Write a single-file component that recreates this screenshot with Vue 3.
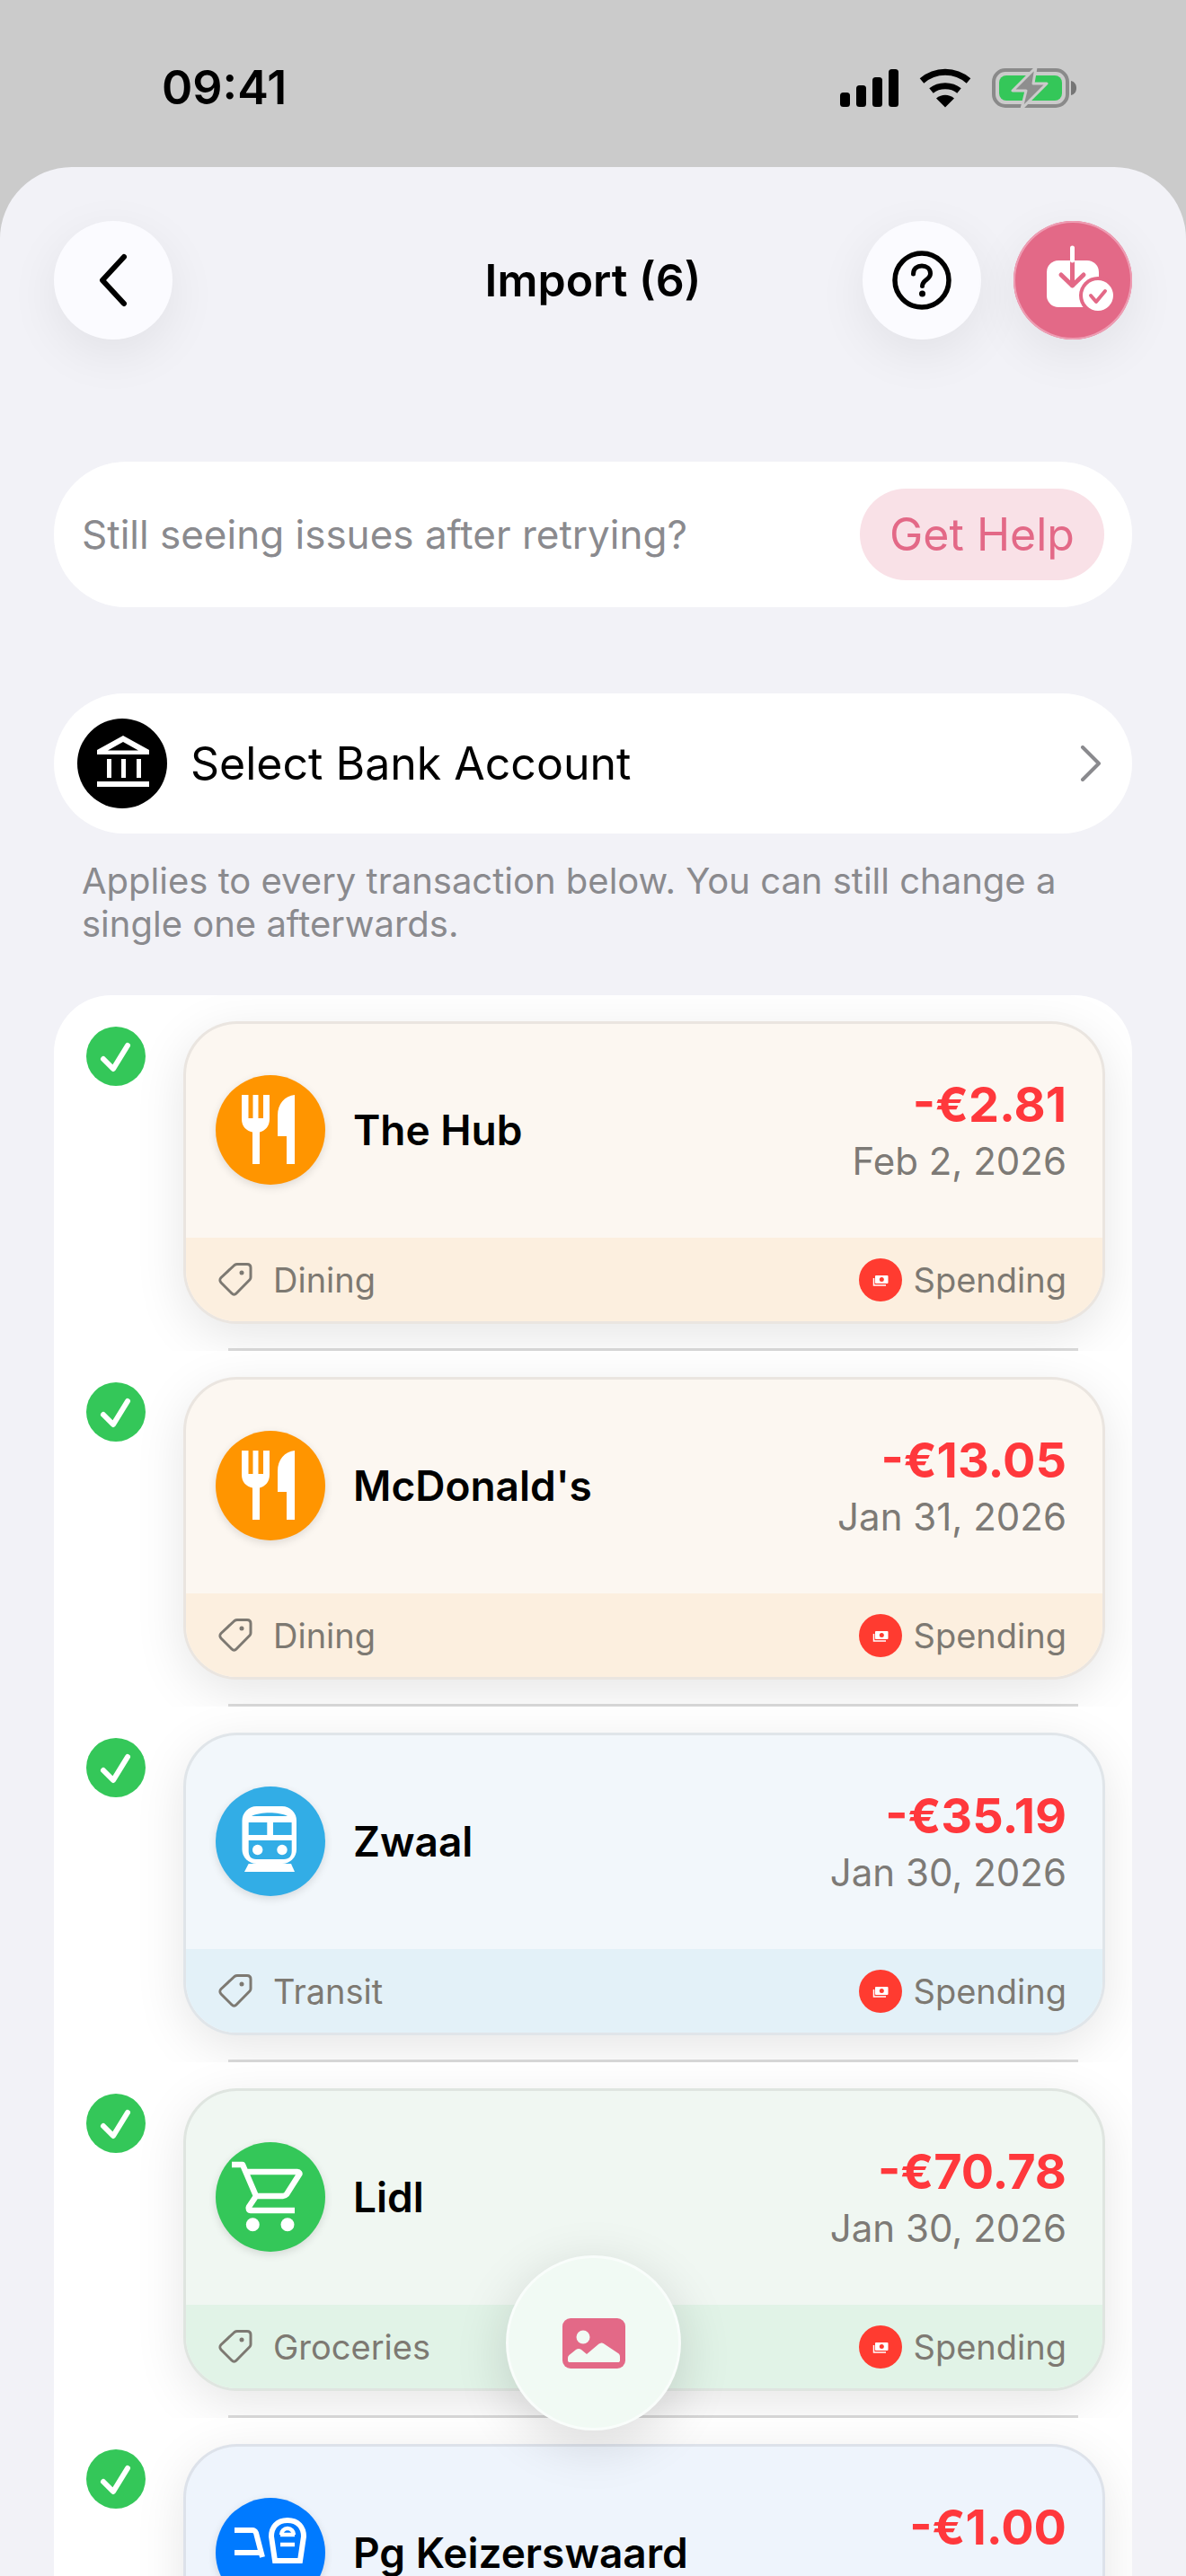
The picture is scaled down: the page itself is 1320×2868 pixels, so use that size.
<script setup>
const rows = [
  { name: 'The Hub', amount: '-€2.81', date: 'Feb 2, 2026', cat: 'Dining', icon: 'food', color: '#ff9500', top: '#fcf7f1', band: '#fcefdf' },
  { name: "McDonald's", amount: '-€13.05', date: 'Jan 31, 2026', cat: 'Dining', icon: 'food', color: '#ff9500', top: '#fcf7f1', band: '#fcefdf' },
  { name: 'Zwaal', amount: '-€35.19', date: 'Jan 30, 2026', cat: 'Transit', icon: 'train', color: '#32ade6', top: '#f2f7fb', band: '#e3f1f8' },
  { name: 'Lidl', amount: '-€70.78', date: 'Jan 30, 2026', cat: 'Groceries', icon: 'cart', color: '#34c759', top: '#f0f7f2', band: '#e1f3e7' },
  { name: 'Pg Keizerswaard', amount: '-€1.00', icon: 'mixed', color: '#007aff', top: '#eef4fc', band: '#e2edfb' }
]
</script>

<template>
  <div class="phone">
    <header class="status">
      <span class="time">09:41</span>
      <div class="status-icons">
        <svg class="signal" width="65" height="42" viewBox="0 0 65 42" fill="#000">
          <rect x="0" y="26" width="11" height="16" rx="3.5" />
          <rect x="18" y="18" width="11" height="24" rx="3.5" />
          <rect x="36" y="9" width="11" height="33" rx="3.5" />
          <rect x="54" y="0" width="11" height="42" rx="3.5" />
        </svg>
        <svg width="58" height="44" viewBox="0 0 58 44" fill="none" stroke="#000" stroke-width="7">
          <path d="M3 14C18 1 40 1 55 14" />
          <path d="M13.5 25C22 18 36 18 44.500 25" />
          <path d="M19 33.500L29 43.500L39 33.500C33 28.500 25 28.500 19 33.500Z" fill="#000" stroke="none" />
        </svg>
        <svg width="94" height="46" viewBox="0 0 94 46">
          <rect x="2" y="3" width="82" height="40" rx="13" fill="none" stroke="#8a8a8a" stroke-width="4" />
          <rect x="8" y="9" width="70" height="28" rx="8" fill="#34c759" />
          <path d="M88 15c4 1 6 4 6 8s-2 7-6 8z" fill="#757575" />
          <path d="M49 0L23 26H38L33 46L61 18H46Z" fill="#8e8e8e" stroke="#cbcbcb" stroke-width="3" stroke-linejoin="round" />
        </svg>
      </div>
    </header>

    <main class="sheet">
      <div class="topbar">
        <button class="round">
          <svg width="36" height="60" viewBox="0 0 36 60" fill="none" stroke="#000" stroke-width="6" stroke-linecap="round" stroke-linejoin="round">
            <path d="M30 4L6 30L30 56" />
          </svg>
        </button>
        <h1 class="title">Import (6)</h1>
        <div class="actions">
          <button class="round">
            <svg width="68" height="68" viewBox="0 0 68 68" fill="none">
              <circle cx="34" cy="34" r="30" stroke="#000" stroke-width="5.500" />
              <path d="M24.500 27c0-6 4.500-9 9.500-9s9.500 3 9.500 8.500c0 7-9 7-9 14" stroke="#000" stroke-width="5" stroke-linecap="round" />
              <circle cx="34.500" cy="49" r="3.500" fill="#000" />
            </svg>
          </button>
          <button class="round primary">
            <svg width="132" height="132" viewBox="1128 246 132 132" fill="none">
              <rect x="1165" y="290" width="58" height="52" rx="13" fill="#fff" />
              <path d="M1193.500 276V318M1181 306L1193.500 318L1206 306" stroke="#e36987" stroke-width="5" stroke-linecap="round" stroke-linejoin="round" />
              <path d="M1193.500 276V290" stroke="#fff" stroke-width="5" stroke-linecap="round" />
              <circle cx="1222" cy="329" r="21" fill="#e36987" />
              <circle cx="1222" cy="329" r="17" fill="#fff" />
              <path d="M1214 329L1220 336L1230 324" stroke="#e36987" stroke-width="4" stroke-linecap="round" stroke-linejoin="round" />
            </svg>
          </button>
        </div>
      </div>

      <section class="pill-card banner">
        <span class="banner-text">Still seeing issues after retrying?</span>
        <span class="help">Get Help</span>
      </section>

      <section class="pill-card bank">
        <span class="bank-icon">
          <svg width="100" height="100" viewBox="0 0 100 100" fill="#fff">
            <path fill-rule="evenodd" d="M51 19L80 35V40H22V35ZM51 26L34 35.500H68Z" />
            <rect x="33" y="45" width="5" height="21" />
            <rect x="49" y="45" width="5" height="21" />
            <rect x="66" y="45" width="5" height="21" />
            <rect x="22" y="70" width="58" height="6" />
          </svg>
        </span>
        <span class="bank-label">Select Bank Account</span>
        <svg class="chev" width="24" height="40" viewBox="0 0 24 40" fill="none" stroke="#8a8a8e" stroke-width="4" stroke-linecap="round" stroke-linejoin="round">
          <path d="M3 2L21 20L3 38" />
        </svg>
      </section>

      <p class="hint">Applies to every transaction below. You can still change a single one afterwards.</p>

      <section class="list">
        <article v-for="r in rows" :key="r.name" class="row">
          <div class="row-body">
            <svg class="check" width="66" height="66" viewBox="0 0 66 66" fill="none">
              <circle cx="33" cy="33" r="33" fill="#34c759" />
              <path d="M19 36L30 47L46 21" stroke="#fff" stroke-width="6" stroke-linecap="round" stroke-linejoin="round" />
            </svg>
            <div class="card" :style="{ background: r.top }">
              <div class="card-top">
                <span class="cat-icon" :style="{ background: r.color }">
                  <svg width="122" height="122" viewBox="0 0 122 122">
                    <g v-if="r.icon === 'food'" fill="#fff">
                      <path d="M29 22h7.500v26h5V22h6v26h5.500V22H60v27c0 8-5 13-11 14.500V99h-8V63.500C34 62 29 57 29 49z" />
                      <path d="M88 22V99H79V68H69V45C69 32 77 23 88 22z" />
                    </g>
                    <g v-else-if="r.icon === 'train'">
                      <rect x="29.500" y="22" width="60.500" height="64" rx="16" fill="#fff" />
                      <path d="M36.700 86H84L88 95H32Z" fill="#fff" />
                      <path d="M40 33C50 28 70 28 80 33Z" fill="#32ade6" />
                      <rect x="36.700" y="40" width="20.600" height="14" fill="#32ade6" />
                      <rect x="64" y="40" width="20.600" height="14" fill="#32ade6" />
                      <path d="M36.700 60H84.700V72C84.700 77 82 81 76 81H45C39 81 36.700 77 36.700 72Z" fill="#32ade6" />
                      <circle cx="46.700" cy="70.500" r="5.700" fill="#fff" />
                      <circle cx="74" cy="70.500" r="5.700" fill="#fff" />
                    </g>
                    <g v-else-if="r.icon === 'cart'">
                      <path d="M18 25H30L45 60L37 72C36 74 37 76 39 76H88M35 33H91C93 33 94 35 93 36L79 58C78 59 77 60 75 60H45" fill="none" stroke="#fff" stroke-width="6.500" stroke-linejoin="round" />
                      <circle cx="41.300" cy="91.700" r="7.500" fill="#fff" />
                      <circle cx="80" cy="91.700" r="7.500" fill="#fff" />
                    </g>
                    <g v-else fill="none" stroke="#fff" stroke-width="6">
                      <path d="M80 25C68 25 62 33 62 43L66 70H94L98 43C98 33 92 25 80 25Z" />
                      <path d="M73 41A7 7 0 0 1 87 41M72 41H88M72 52H88" stroke-width="4.500" />
                      <path d="M21 36H41C43 36 44 37 45 39L52 66M21 61H50" />
                    </g>
                  </svg>
                </span>
                <span class="name">{{ r.name }}</span>
                <div class="money">
                  <span class="amount">{{ r.amount }}</span>
                  <span v-if="r.date" class="date">{{ r.date }}</span>
                </div>
              </div>
              <div v-if="r.cat" class="band" :style="{ background: r.band }">
                <span class="band-side">
                  <svg width="38" height="37" viewBox="0 0 38 37" fill="none" stroke="#7d7972" stroke-width="3" stroke-linejoin="round">
                    <path d="M3 16.500L18 2.500C19 1.800 20 1.500 21 1.500H32C34.500 1.500 36 3 36 5.500V16C36 17 35.700 18 35 18.700L20 34C18.500 35.500 16.500 35.500 15 34L3 22C1.500 20.500 1.500 18 3 16.500Z" />
                    <circle cx="26" cy="11" r="2.500" fill="#7d7972" stroke="none" />
                  </svg>
                  <span class="band-text cat">{{ r.cat }}</span>
                </span>
                <span class="band-side">
                  <svg width="48" height="48" viewBox="0 0 48 48">
                    <circle cx="24" cy="24" r="24" fill="#ff3b30" />
                    <rect x="18" y="19" width="14.500" height="9" rx="1" fill="#fff" />
                    <circle cx="25.300" cy="23.500" r="2.500" fill="#ff3b30" />
                    <path d="M16.500 22V30H30" fill="none" stroke="#fff" stroke-width="1.500" />
                  </svg>
                  <span class="band-text">Spending</span>
                </span>
              </div>
            </div>
          </div>
          <div class="sep"></div>
        </article>
      </section>
    </main>

    <button class="fab">
      <svg width="70" height="56" viewBox="0 0 70 56">
        <rect width="70" height="56" rx="9" fill="#e36987" />
        <circle cx="23" cy="21" r="7.500" fill="#f1faf4" />
        <path d="M6 47V44C6 43 6.500 42 7.500 41L15 35C17 33.500 19 33.500 21 35L27 40L40 29C43 27 45 27 47 29L62 39C63.500 40 64 41 64 43V47C64 48.500 63 49 62 49H8C7 49 6 48.500 6 47Z" fill="#f1faf4" />
      </svg>
    </button>
  </div>
</template>

<style scoped>
.phone {
  position: relative;
  width: 1320px;
  height: 2868px;
  overflow: hidden;
  background: #cbcbcb;
  font-family: "Inter", "Noto Sans", sans-serif;
  color: #000;
}
.status {
  height: 186px;
  box-sizing: border-box;
  padding: 72px 60px 0 180px;
  display: flex;
  justify-content: space-between;
  align-items: flex-start;
}
.time {
  font-size: 52px;
  line-height: 52px;
  font-weight: 600;
  margin-top: 0;
}
.status-icons {
  display: flex;
  align-items: center;
  gap: 23px;
  margin-top: 3px;
  margin-right: 62px;
}
.status-icons svg {
  display: block;
  flex: none;
}
.sheet {
  height: 2682px;
  box-sizing: border-box;
  background: #f2f2f7;
  border-radius: 80px 80px 0 0;
  padding: 60px 60px 0;
}
.topbar {
  position: relative;
  display: flex;
  align-items: center;
  justify-content: space-between;
  height: 132px;
}
.title {
  margin: 0;
  font-size: 50px;
  line-height: 60px;
  font-weight: 600;
  position: absolute;
  left: 0;
  right: 0;
  text-align: center;
}
.actions {
  display: flex;
  gap: 36px;
}
.round {
  width: 132px;
  height: 132px;
  border: 0;
  padding: 0;
  border-radius: 50%;
  background: #fbfbff;
  box-shadow: 0 16px 56px rgba(0, 0, 0, 0.07);
  display: flex;
  align-items: center;
  justify-content: center;
  position: relative;
  z-index: 1;
}
.primary {
  background: #e36987;
  border: 0;
  box-shadow: 0 16px 56px rgba(0, 0, 0, 0.07), inset 0 0 0 2px #ee9db3;
}
.pill-card {
  background: #fff;
  border-radius: 80px;
  display: flex;
  align-items: center;
}
.banner {
  margin-top: 136px;
  height: 162px;
  padding: 0 31px;
  justify-content: space-between;
}
.banner-text {
  font-size: 44px;
  color: #8a8a8e;
}
.help {
  width: 272px;
  height: 102px;
  border-radius: 51px;
  background: #f9e1e7;
  color: #e36987;
  font-size: 50px;
  display: flex;
  align-items: center;
  justify-content: center;
}
.bank {
  margin-top: 96px;
  height: 156px;
  padding: 0 34px 0 26px;
}
.bank-icon {
  width: 100px;
  height: 100px;
  border-radius: 50%;
  background: #000;
  flex: none;
}
.bank-icon svg,
.cat-icon svg {
  display: block;
}
.bank-label {
  margin-left: 26px;
  font-size: 50px;
  flex: 1;
}
.hint {
  margin: 29px 31px 0;
  font-size: 40px;
  line-height: 48px;
  color: #8a8a8e;
}
.list {
  margin-top: 55px;
  background: #fff;
  border-radius: 64px 64px 0 0;
  overflow: hidden;
}
.row {
  height: 396px;
  overflow: hidden;
}
.row-body {
  display: flex;
  align-items: flex-start;
  padding: 29px 30px 0 36px;
  gap: 42px;
}
.check {
  flex: none;
  margin-top: 6px;
  display: block;
}
.card {
  flex: 1;
  height: 337px;
  box-sizing: border-box;
  border: 3px solid rgba(0, 0, 0, 0.07);
  border-radius: 60px;
  box-shadow: 0 14px 56px rgba(0, 0, 0, 0.1);
  overflow: hidden;
  background-clip: padding-box;
}
.card-top {
  height: 238px;
  padding: 0 40px 0 33px;
  display: flex;
  align-items: flex-start;
}
.cat-icon {
  flex: none;
  width: 122px;
  height: 122px;
  margin-top: 57px;
  border-radius: 50%;
  box-shadow: 0 3px 10px rgba(0, 0, 0, 0.12);
}
.name {
  margin: 87px 0 0 31px;
  font-size: 46px;
  line-height: 62px;
  font-weight: 600;
  flex: 1;
}
.money {
  margin-top: 60px;
  display: flex;
  flex-direction: column;
  align-items: flex-end;
}
.amount {
  font-size: 54px;
  line-height: 60px;
  font-weight: 700;
  color: #ff383c;
}
.date {
  margin-top: 3px;
  font-size: 42px;
  line-height: 60px;
  color: #7d7a76;
}
.band {
  height: 93px;
  padding: 0 40px 0 36px;
  display: flex;
  align-items: center;
  justify-content: space-between;
}
.band-side {
  display: flex;
  align-items: center;
  gap: 13px;
}
.band-side svg {
  display: block;
  flex: none;
}
.band-text {
  font-size: 38px;
  line-height: 48px;
  color: #7d7972;
}
.cat {
  margin-left: 10px;
}
.sep {
  height: 3px;
  width: 946px;
  margin: 27px 0 0 194px;
  background: #dcdcdc;
}
.fab {
  position: absolute;
  left: 563px;
  top: 2511px;
  width: 195px;
  height: 195px;
  padding: 0;
  border-radius: 50%;
  border: 3px solid rgba(255, 255, 255, 0.6);
  background: #f1faf4;
  box-shadow: 0 14px 60px rgba(0, 0, 0, 0.14);
  display: flex;
  align-items: center;
  justify-content: center;
  box-sizing: border-box;
}
</style>

<style>
html, body {
  margin: 0;
}
</style>
